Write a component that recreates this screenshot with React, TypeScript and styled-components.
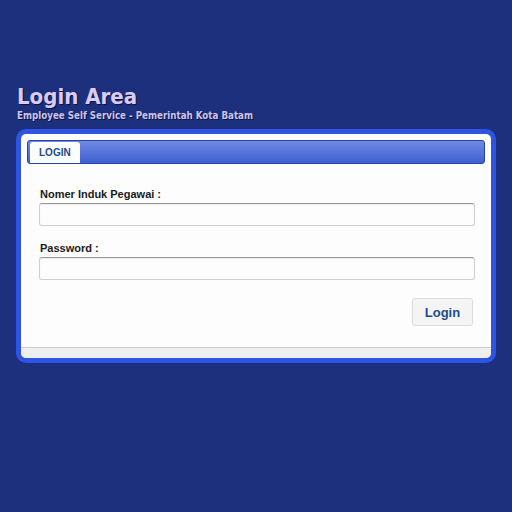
import React from 'react';
import styled, { createGlobalStyle } from 'styled-components';

const GlobalStyle = createGlobalStyle`
  html, body {
    margin: 0;
    padding: 0;
    background: #1c307d;
  }
  body {
    font-family: "Liberation Sans", Arial, sans-serif;
  }
`;

const Page = styled.div`
  width: 512px;
  height: 512px;
  box-sizing: border-box;
  padding: 84px 16px 0 16px;
  background: #1c307d;
`;

const Header = styled.div`
  padding-left: 1px;
  margin-bottom: 7px;
`;

const Title = styled.h1`
  margin: 0;
  font-family: "DejaVu Sans Condensed", "DejaVu Sans", sans-serif;
  font-weight: bold;
  font-size: 22px;
  line-height: 26px;
  color: #d9cdf7;
  text-shadow: 1px 1px 1px #0d1440;
`;

const Subtitle = styled.div`
  font-family: "DejaVu Sans Condensed", "DejaVu Sans", sans-serif;
  font-weight: bold;
  font-size: 9.7px;
  line-height: 12px;
  color: #cbc4f2;
  text-shadow: 1px 1px 0 #0d1440;
`;

const Panel = styled.div`
  border: 5px solid #2d54e2;
  border-radius: 10px;
  background: #fdfdfd;
  overflow: hidden;
`;

const TabBar = styled.div`
  margin: 6px 6px 0 6px;
  height: 24px;
  box-sizing: border-box;
  border: 1px solid #23479e;
  border-radius: 3px;
  background: linear-gradient(#7189e2, #3e60d2);
  display: flex;
  align-items: flex-end;
  padding-left: 2px;
`;

const Tab = styled.div<{ active?: boolean }>`
  height: 21px;
  padding: 0 9px;
  display: flex;
  align-items: center;
  background: ${p => (p.active ? '#fdfdfd' : 'transparent')};
  border-radius: 3px 3px 0 0;
  font-size: 10px;
  font-weight: bold;
  color: #1e4c8c;
`;

const Form = styled.form`
  padding: 24px 16px 21px 18px;
  display: grid;
  grid-gap: 16px;
`;

const Field = styled.div`
  display: grid;
  grid-gap: 2px;
  & label {
    padding-left: 1px;
    font-size: 11px;
    line-height: 13px;
    font-weight: bold;
    color: #1a1a1a;
  }
  & input {
    height: 23px;
    box-sizing: border-box;
    border: 1px solid #cfcfcf;
    border-top-color: #9a9a9a;
    border-radius: 3px;
    background: #fdfdfd;
    box-shadow: inset 0 1px 1px rgba(0, 0, 0, 0.08);
    margin: 0;
  }
`;

const Actions = styled.div`
  display: flex;
  justify-content: flex-end;
  padding-top: 2px;
  padding-right: 2px;
`;

const LoginButton = styled.button`
  width: 61px;
  height: 28px;
  border: 1px solid #dcdcdc;
  border-radius: 3px;
  background: #f4f4f4;
  font-family: "Liberation Sans", Arial, sans-serif;
  font-size: 13px;
  font-weight: bold;
  color: #1d4c88;
  cursor: pointer;
`;

const Footer = styled.div`
  height: 10px;
  border-top: 1px solid #cccccc;
  background: #efefef;
`;

export default function App() {
  return (
    <Page>
      <GlobalStyle />
      <Header>
        <Title>Login Area</Title>
        <Subtitle>Employee Self Service - Pemerintah Kota Batam</Subtitle>
      </Header>
      <Panel>
        <TabBar>
          <Tab active>LOGIN</Tab>
        </TabBar>
        <Form onSubmit={e => e.preventDefault()}>
          <Field>
            <label htmlFor="nip">Nomer Induk Pegawai :</label>
            <input id="nip" type="text" />
          </Field>
          <Field>
            <label htmlFor="password">Password :</label>
            <input id="password" type="password" />
          </Field>
          <Actions>
            <LoginButton type="submit">Login</LoginButton>
          </Actions>
        </Form>
        <Footer />
      </Panel>
    </Page>
  );
}
